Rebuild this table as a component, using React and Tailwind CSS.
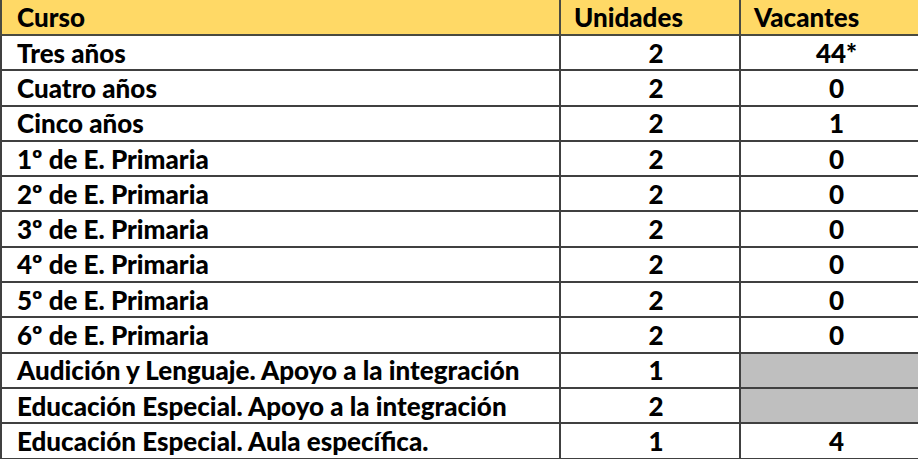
const rows = [
  { curso: 'Tres años', unidades: '2', vacantes: '44*' },
  { curso: 'Cuatro años', unidades: '2', vacantes: '0' },
  { curso: 'Cinco años', unidades: '2', vacantes: '1' },
  { curso: '1º de E. Primaria', unidades: '2', vacantes: '0' },
  { curso: '2º de E. Primaria', unidades: '2', vacantes: '0' },
  { curso: '3º de E. Primaria', unidades: '2', vacantes: '0' },
  { curso: '4º de E. Primaria', unidades: '2', vacantes: '0' },
  { curso: '5º de E. Primaria', unidades: '2', vacantes: '0' },
  { curso: '6º de E. Primaria', unidades: '2', vacantes: '0' },
  { curso: 'Audición y Lenguaje. Apoyo a la integración', unidades: '1', vacantes: null },
  { curso: 'Educación Especial. Apoyo a la integración', unidades: '2', vacantes: null },
  { curso: 'Educación Especial. Aula específica.', unidades: '1', vacantes: '4' },
];

export default function App() {
  return (
    <div className="w-[918px] h-[459px] overflow-hidden bg-white font-['Lato',sans-serif] font-black text-[26px] text-black">
      <table className="border-collapse w-[930px] table-fixed">
        <colgroup>
          <col className="w-[559px]" />
          <col className="w-[180px]" />
          <col />
        </colgroup>
        <thead>
          <tr className="h-[35px] bg-[#ffd966]">
            <th className="border-2 border-t-0 border-[#4a4a40] text-left pl-[15px] leading-none font-black">Curso</th>
            <th className="border-2 border-t-0 border-[#4a4a40] text-left pl-[13px] leading-none font-black">Unidades</th>
            <th className="border-2 border-t-0 border-[#4a4a40] text-left pl-[13px] leading-none font-black">Vacantes</th>
          </tr>
        </thead>
        <tbody>
          {rows.map((r) => (
            <tr key={r.curso} className="h-[35.3px]">
              <td className="border-2 border-[#404040] pl-[15px] leading-none">{r.curso}</td>
              <td className="border-2 border-[#404040] text-center pl-[12px] leading-none">{r.unidades}</td>
              {r.vacantes === null ? (
                <td className="border-2 border-[#404040] bg-[#bfbfbf]" />
              ) : (
                <td className="border-2 border-[#404040] text-center pl-[6px] pr-[2px] leading-none">{r.vacantes}</td>
              )}
            </tr>
          ))}
        </tbody>
      </table>
    </div>
  );
}
